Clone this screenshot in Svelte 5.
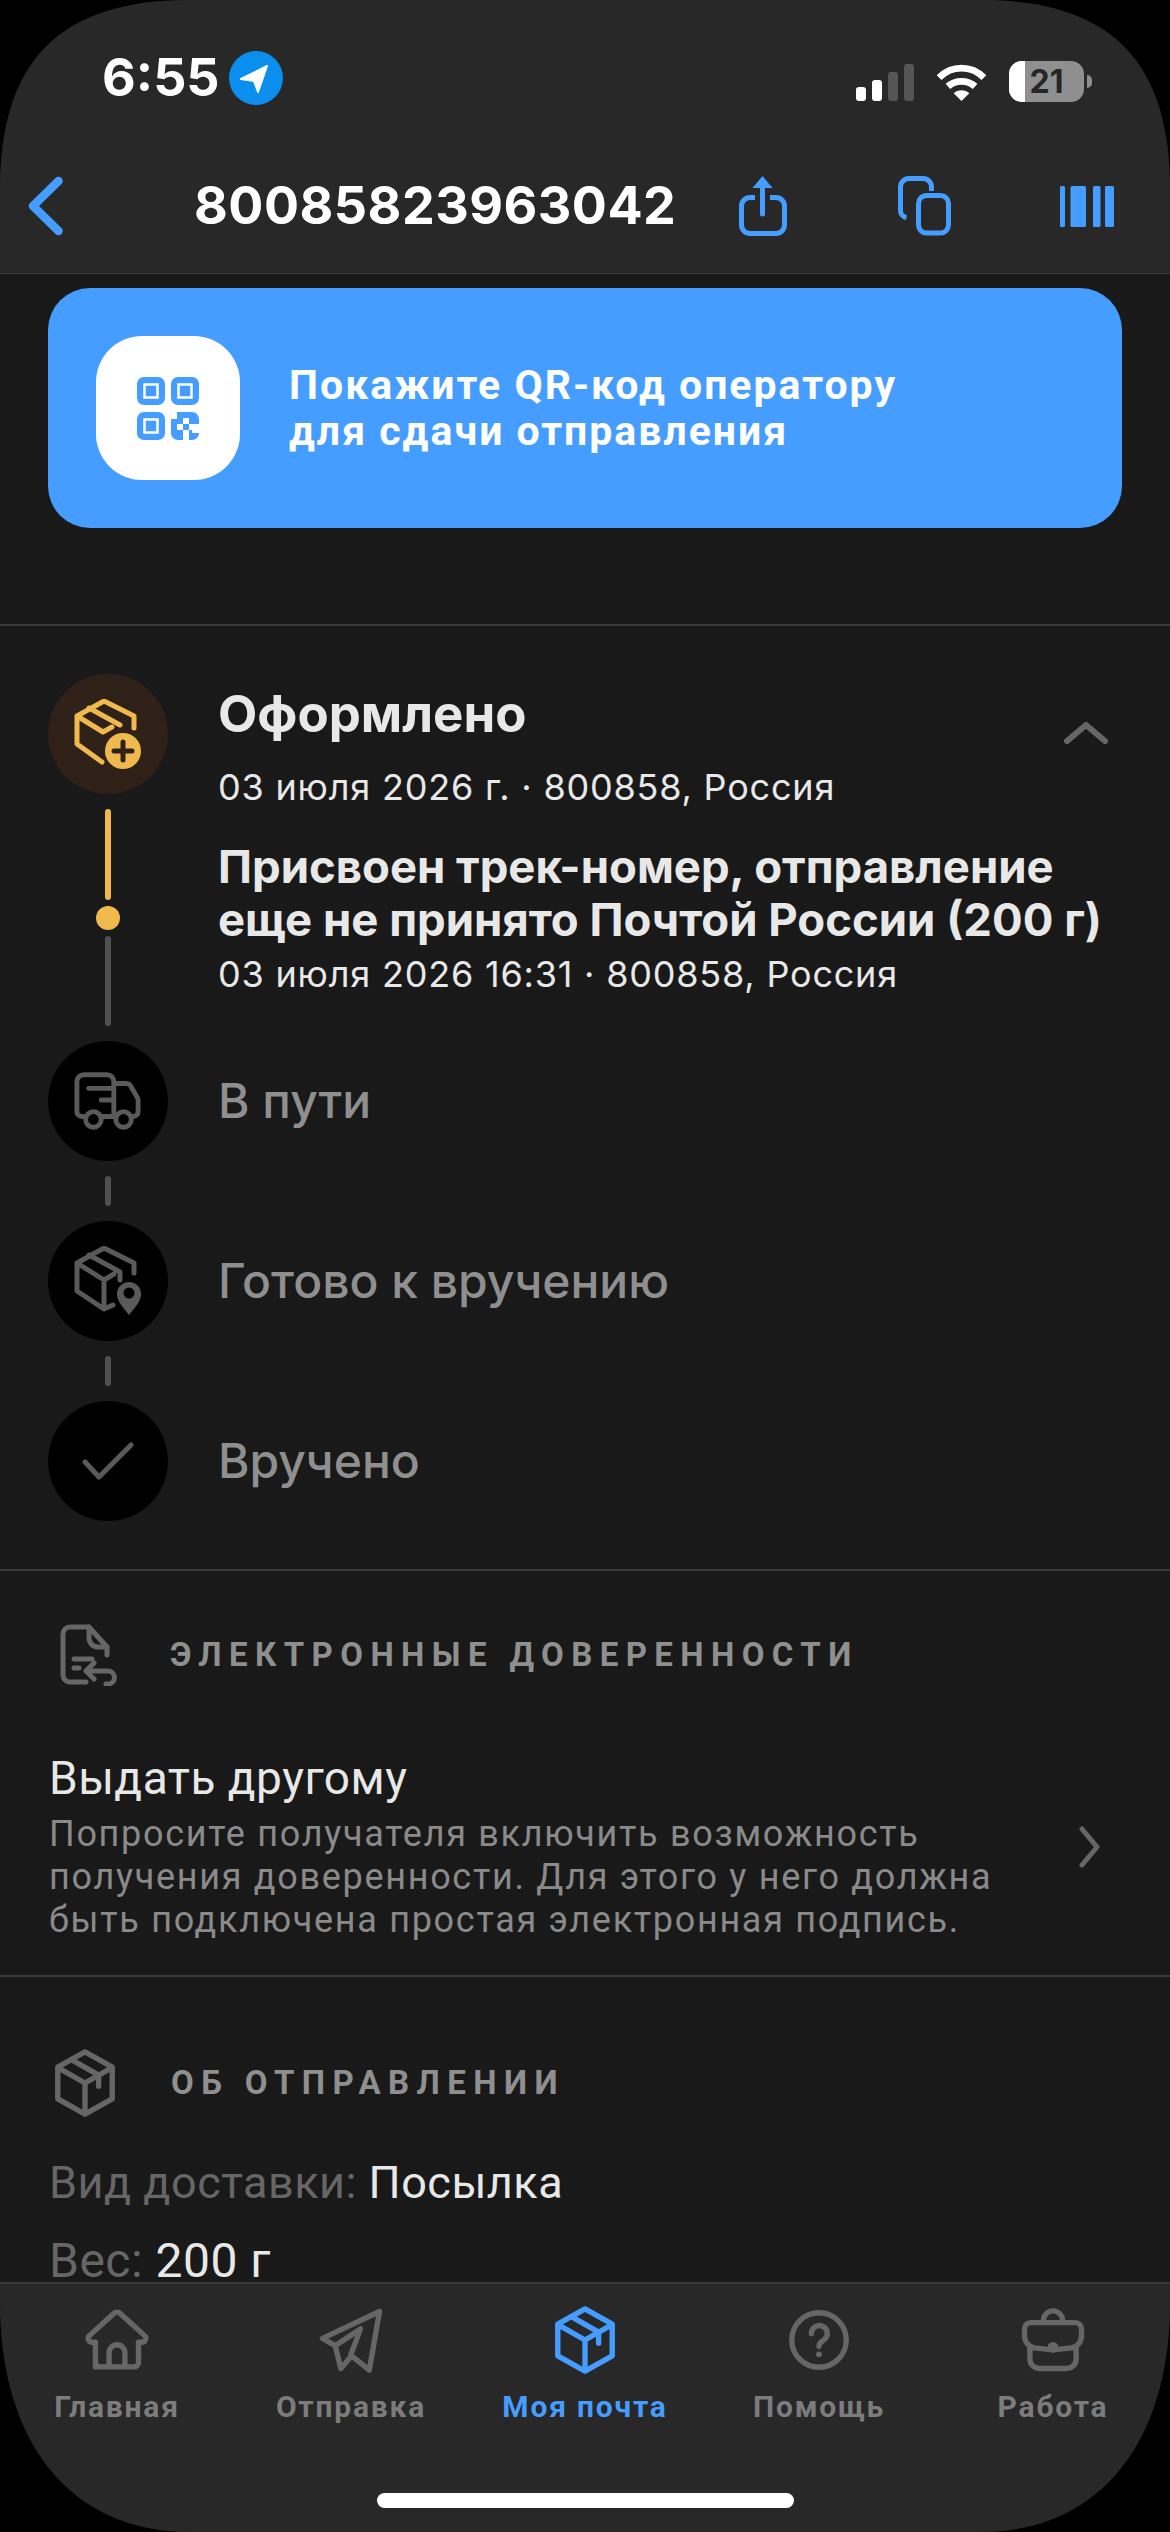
<script>
  const tabs = [
    { label: 'Главная', icon: 'home' },
    { label: 'Отправка', icon: 'send' },
    { label: 'Моя почта', icon: 'box', active: true },
    { label: 'Помощь', icon: 'help' },
    { label: 'Работа', icon: 'work' }
  ];
</script>

{#snippet box()}
  <path d="M12 2.200 20.600 7v10L12 21.800 3.400 17V7Z" />
  <path d="M3.600 7.200 12 12l8.400-4.800M12 12v9.600M7.700 4.600l8.600 4.900V13" />
{/snippet}

<div class="screen">
  <header class="top">
    <div class="status">
      <span class="time">6:55</span>
      <svg class="loc" viewBox="0 0 54 54"><circle cx="27" cy="27" r="27" fill="#0a8fee"/><path d="M38 15 12 28l13 2 4 11Z" fill="#fff" stroke="#fff" stroke-width="2" stroke-linejoin="round"/></svg>
      <span class="spacer"></span>
      <svg class="signal" viewBox="0 0 58 37"><rect x="0" y="23" width="10" height="14" rx="3" fill="#fff"/><rect x="16" y="16" width="10" height="21" rx="3" fill="#fff"/><rect x="32" y="8" width="10" height="29" rx="3" fill="#555"/><rect x="48" y="0" width="10" height="37" rx="3" fill="#555"/></svg>
      <svg class="wifi" viewBox="0 0 52 38" fill="none" stroke="#fff" stroke-width="7"><path d="M3 14C16 1 36 1 49 14"/><path d="M12 23c8-7 20-7 28 0"/><path d="M26 38 18 30c4-4 12-4 16 0Z" fill="#fff" stroke="none"/></svg>
      <span class="battery"><i class="fill"></i><b>21</b></span>
      <i class="nub"></i>
    </div>
    <nav class="nav">
      <svg class="back" viewBox="0 0 36 60" fill="none" stroke="#459eff" stroke-width="8.500" stroke-linecap="round" stroke-linejoin="round"><path d="M30.500 5 5 30l25.500 25"/></svg>
      <h1>80085823963042</h1>
      <svg class="share" viewBox="0 0 48 60" fill="none" stroke="#459eff" stroke-width="5"><path d="M23.500 38V8" stroke-linecap="round"/><path d="M23.500 0l10 12h-20Z" fill="#459eff" stroke="none"/><path d="M16 21.500H11a8.500 8.500 0 0 0-8.500 8.500V49a8.500 8.500 0 0 0 8.500 8.500h26a8.500 8.500 0 0 0 8.500-8.500V30a8.500 8.500 0 0 0-8.500-8.500H31"/></svg>
      <svg class="copy" viewBox="0 0 54 60" fill="none" stroke="#459eff" stroke-width="5"><rect x="20.500" y="19.500" width="30" height="37.500" rx="8"/><path d="M33.500 15v-4A8.500 8.500 0 0 0 25 2.500H11A8.500 8.500 0 0 0 2.500 11v24a7 7 0 0 0 6 6.500"/></svg>
      <svg class="barcode" viewBox="0 0 54 41" fill="#459eff"><rect width="5" height="41" rx="1.500"/><rect x="10.500" width="15.500" height="41" rx="1.500"/><rect x="33" width="7.500" height="41" rx="1.500"/><rect x="45" width="9" height="41" rx="1.500"/></svg>
    </nav>
  </header>

  <main class="content">
    <section class="card">
      <div class="qr-tile">
        <svg viewBox="0 0 62 63">
          <g fill="#459eff"><rect width="28" height="28" rx="7"/><rect x="34" width="28" height="28" rx="7"/><rect y="35" width="28" height="28" rx="7"/><rect x="34" y="35" width="28" height="28" rx="7"/></g>
          <g fill="none" stroke="#fff" stroke-width="2.500"><rect x="7.500" y="7.500" width="13" height="13"/><rect x="41.500" y="7.500" width="13" height="13"/><rect x="7.500" y="42.500" width="13" height="13"/></g>
          <g fill="#fff"><rect x="34" y="35" width="6" height="7"/><rect x="46" y="41" width="6" height="6"/><rect x="40" y="47" width="6" height="6"/><rect x="52" y="47" width="10" height="6"/><rect x="46" y="53" width="6" height="10"/><rect x="55" y="53" width="7" height="3"/></g>
        </svg>
      </div>
      <p>Покажите QR-код оператору<br />для сдачи отправления</p>
    </section>

    <div class="rule first"></div>

    <section class="timeline">
      <div class="stage current">
        <div class="rail">
          <span class="disc amber">
            <svg viewBox="0 0 68 70" fill="none" stroke="#f0b94d" stroke-width="5" stroke-linejoin="round" stroke-linecap="round">
              <path d="M30 2 60 17v12M30 2 3 17v28l25 18M3 17l26 16 9-5M15 9l31 17"/>
              <circle cx="49" cy="52" r="18" fill="#f0b94d" stroke="none"/>
              <path d="M49 43v18M40 52h18" stroke="#2f2118"/>
            </svg>
          </span>
          <i class="bar amber-bar long"></i>
          <i class="dot"></i>
          <i class="bar grey-bar long2"></i>
        </div>
        <div class="body">
          <div class="head">
            <h2>Оформлено</h2>
            <svg class="up" viewBox="0 0 44 22" fill="none" stroke="#666" stroke-width="6" stroke-linecap="round" stroke-linejoin="round"><path d="M3 19 22 3l19 16"/></svg>
          </div>
          <p class="meta">03 июля 2026 г. · 800858, Россия</p>
          <p class="event">Присвоен трек-номер, отправление<br />еще не принято Почтой России (200 г)</p>
          <p class="meta tight">03 июля 2026 16:31 · 800858, Россия</p>
        </div>
      </div>

      <div class="stage step">
        <div class="rail">
          <span class="disc">
            <svg viewBox="0 0 70 60" fill="none" stroke="#5a5a5a" stroke-width="5" stroke-linecap="round" stroke-linejoin="round"><path d="M10 46H8a5 5 0 0 1-5-5V10a7 7 0 0 1 7-7h24a7 7 0 0 1 7 7v36M15 17h26M28 29h13M41 12h13a5 5 0 0 1 4 2l7 12a6 6 0 0 1 1 3v12a5 5 0 0 1-5 5h-2M28 46h14"/><circle cx="20" cy="49" r="8"/><circle cx="51" cy="49" r="8"/></svg>
          </span>
        </div>
        <p class="label">В пути</p>
      </div>
      <i class="bar grey-bar short"></i>
      <div class="stage step">
        <div class="rail">
          <span class="disc">
            <svg viewBox="0 0 68 70" fill="none" stroke="#5a5a5a" stroke-width="5" stroke-linejoin="round" stroke-linecap="round"><path d="M30 2 60 17v10M30 2 3 17v28l27 18 9-4M3 17l27 17 10-6M30 34v29M15 9l31 17v8"/><path d="M55 69C45 57 43 53 43 48a12 12 0 0 1 24 0c0 5-2 9-12 21Z" fill="#5a5a5a" stroke="none"/><circle cx="55" cy="47" r="5.500" fill="#000" stroke="none"/></svg>
          </span>
        </div>
        <p class="label">Готово к вручению</p>
      </div>
      <i class="bar grey-bar short"></i>
      <div class="stage step">
        <div class="rail">
          <span class="disc">
            <svg class="tick" viewBox="0 0 52 38" fill="none" stroke="#5a5a5a" stroke-width="5" stroke-linecap="round" stroke-linejoin="round"><path d="M3 20l14 15L49 3"/></svg>
          </span>
        </div>
        <p class="label">Вручено</p>
      </div>
    </section>

    <div class="rule second"></div>

    <section class="attorney">
      <div class="section-head doc-head">
        <svg class="doc" viewBox="0 0 58 62" fill="none" stroke="#666" stroke-width="5" stroke-linecap="round" stroke-linejoin="round"><path d="M26 58H10a7 7 0 0 1-7-7V10a7 7 0 0 1 7-7h19l18 20v8"/><path d="M29 3v11a9 9 0 0 0 9 9h9M14 35h18M14 44h5"/><path d="M34 39l-8 8 8 8M26 47h22a6.500 6.500 0 0 1 0 13h-2"/></svg>
        <h3>ЭЛЕКТРОННЫЕ ДОВЕРЕННОСТИ</h3>
      </div>
      <div class="give">
        <div>
          <h4>Выдать другому</h4>
          <p>Попросите получателя включить возможность<br />получения доверенности. Для этого у него должна<br />быть подключена простая электронная подпись.</p>
        </div>
        <svg class="right" viewBox="0 0 21 42" fill="none" stroke="#666" stroke-width="5" stroke-linecap="round" stroke-linejoin="round"><path d="M3 3l15 18L3 39"/></svg>
      </div>
    </section>

    <div class="rule"></div>

    <section class="about">
      <div class="section-head box-head">
        <svg class="boxicon" viewBox="0 0 24 24" fill="none" stroke="#666" stroke-width="1.700" stroke-linecap="round" stroke-linejoin="round">{@render box()}</svg>
        <h3>ОБ ОТПРАВЛЕНИИ</h3>
      </div>
      <p class="kv"><span>Вид доставки:</span> Посылка</p>
      <p class="kv last"><span>Вес:</span> 200 г</p>
    </section>
  </main>

  <footer class="tabbar">
    <div class="tabs">
      {#each tabs as t}
        <div class="tab" class:active={t.active}>
          <svg viewBox="0 0 24 24" fill="none" stroke="currentColor" stroke-width="1.700" stroke-linecap="round" stroke-linejoin="round">
            {#if t.icon === 'home'}
              <path d="M5.200 20.500V12.700H4a1.200 1.200 0 0 1-.8-2L11 3.600a1.500 1.500 0 0 1 2 0l7.800 7.100a1.200 1.200 0 0 1-.8 2h-1.200v6.300a1.500 1.500 0 0 1-1.500 1.500h-10.600a1.500 1.500 0 0 1-1.500-1.500Z"/>
              <path d="M9.500 20v-4a2.500 2.500 0 0 1 5 0v4"/>
            {:else if t.icon === 'send'}
              <path d="M21 3 3 11.500l4 2.300 1.800 7.200 3.400-4 5.600 4.500Z"/>
              <path d="M7 13.800 15 8.500l-3 8"/>
            {:else if t.icon === 'box'}
              {@render box()}
            {:else if t.icon === 'help'}
              <circle cx="12" cy="12" r="8.600"/>
              <path d="M9.600 10a2.500 2.500 0 1 1 3.900 2c-.9.600-1.500 1-1.500 2"/>
              <circle cx="12" cy="16.500" r=".9" fill="currentColor" stroke="none"/>
            {:else}
              <path d="M9 6.500V5.800a3 3 0 0 1 6 0v.7M5 6.500h14a2 2 0 0 1 2 2v2.500a4 4 0 0 1-3 3.500l-6 .6-6-.6a4 4 0 0 1-3-3.500V8.500a2 2 0 0 1 2-2Z"/>
              <path d="M4.700 14.500v3.500a3 3 0 0 0 3 3h8.600a3 3 0 0 0 3-3v-3.500"/>
              <circle cx="12" cy="14.300" r="1.700" fill="currentColor" stroke="none"/>
            {/if}
          </svg>
          <span>{t.label}</span>
        </div>
      {/each}
    </div>
    <i class="home"></i>
  </footer>
</div>

<style>
  :global(body) { margin: 0; background: #000; }
  * { box-sizing: border-box; }
  i { display: block; }
  h1, h2, h3, h4, p { margin: 0; font-weight: inherit; }
  .screen {
    width: 1170px; height: 2532px; background: #191919;
    clip-path: path("M0 190C0 60 60 0 190 0H980C1110 0 1170 60 1170 190V2302C1170 2442 1100 2532 980 2532H190C70 2532 0 2442 0 2302Z");
    overflow: hidden;
    display: flex; flex-direction: column;
    font-family: Inter, "Liberation Sans", sans-serif; color: #e8e8e8;
  }
  .top { height: 274px; flex: none; background: #282828; border-bottom: 1px solid #3c3c3c; padding: 51px 0 0 102px; }
  .status { display: flex; align-items: center; height: 54px; padding-right: 78px; }
  .time { font: 700 52px/54px Inter, sans-serif; color: #fff; width: 127px; white-space: nowrap; }
  .loc { width: 54px; height: 54px; }
  .spacer { flex: 1; }
  .signal { width: 58px; height: 37px; margin: 9px 22px 0 0; }
  .wifi { width: 51px; height: 37px; margin: 9px 22px 0 0; }
  .battery { position: relative; width: 75px; height: 41px; border-radius: 13px; background: #8f8f8f; overflow: hidden; text-align: center; margin-top: 6px; }
  .battery .fill { position: absolute; left: 0; top: 0; bottom: 0; width: 16px; background: #fff; }
  .battery b { position: relative; font: 700 32px/41px Inter, sans-serif; color: #262626; }
  .nub { width: 5px; height: 13px; margin: 6px 0 0 3px; background: #8f8f8f; border-radius: 0 6px 6px 0; }
  .nav { display: flex; align-items: center; margin: 71px 0 0 -74px; height: 60px; position: relative; }
  .nav svg { flex: none; }
  .back { width: 36px; height: 60px; }
  h1 { font: 700 52px/60px Inter, sans-serif; color: #fff; margin-left: 130px; width: 479px; white-space: nowrap; letter-spacing: .5px; }
  .share { width: 48px; height: 60px; margin-left: 66px; }
  .copy { width: 54px; height: 60px; margin-left: 111px; }
  .barcode { width: 54px; height: 41px; margin-left: 108px; }

  .content { flex: 1; min-height: 0; overflow: hidden; padding-top: 14px; }
  .card { margin: 0 48px; height: 240px; border-radius: 42px; background: #459eff; display: flex; align-items: center; padding-left: 48px; }
  .qr-tile { width: 144px; height: 144px; border-radius: 46px; background: #fff; display: flex; align-items: center; justify-content: center; }
  .qr-tile svg { width: 62px; height: 63px; }
  .card p { margin-left: 49px; font: 700 41px/46px Roboto, sans-serif; color: #fff; letter-spacing: 2px; white-space: nowrap; }

  .rule { height: 2px; background: #3a3a3a; }
  .rule.first { margin-top: 96px; }

  .timeline { padding: 48px 48px 0; }
  .stage { display: flex; }
  .rail { width: 120px; flex: none; display: flex; flex-direction: column; align-items: center; }
  .disc { width: 120px; height: 120px; border-radius: 50%; background: #000; display: flex; align-items: center; justify-content: center; }
  .disc svg { width: 68px; height: 70px; }
  .disc .tick { width: 52px; height: 38px; }
  .disc.amber { background: #2f2118; }
  .bar { width: 6px; border-radius: 3px; }
  .amber-bar { background: #f0b94d; }
  .grey-bar { background: #505050; }
  .long { height: 91px; margin-top: 15px; }
  .dot { width: 24px; height: 24px; border-radius: 50%; background: #f0b94d; margin: 6px 0; }
  .long2 { height: 90px; }
  .short { height: 30px; margin: 15px 0 15px 57px; }
  .body { margin-left: 50px; flex: 1; padding-top: 10px; }
  .head { display: flex; justify-content: space-between; align-items: center; height: 60px; }
  h2 { font: 700 51px/60px Inter, sans-serif; }
  .up { width: 44px; height: 22px; margin: 38px 14px 0 0; }
  .meta { font: 400 36px/44px Inter, sans-serif; letter-spacing: .8px; white-space: nowrap; }
  .head + .meta { margin-top: 21px; }
  .event { font: 700 45.500px/53px Inter, sans-serif; margin-top: 31px; white-space: nowrap; }
  .meta.tight { margin-top: 6px; }
  .stage.current { margin-bottom: 15px; }
  .step { align-items: center; }
  .label { margin-left: 50px; font: 500 48px/60px Inter, sans-serif; color: #8f8f8f; }

  .rule.second { margin-top: 48px; }
  .section-head { display: flex; align-items: center; }
  .section-head h3 { font: 700 33px/40px Roboto, sans-serif; color: #8f8f8f; letter-spacing: 7.400px; white-space: nowrap; }
  .attorney { padding: 53px 48px 0; }
  .doc { width: 58px; height: 62px; margin: 0 52px 0 12px; flex: none; }
  .give { display: flex; align-items: center; justify-content: space-between; margin-top: 65px; padding-bottom: 33px; padding-left: 1px; }
  h4 { font: 400 46px/54px Roboto, sans-serif; letter-spacing: .5px; }
  .give p { font: 400 36px/43px Roboto, sans-serif; color: #8a8a8a; letter-spacing: 1.700px; white-space: nowrap; margin-top: 8px; }
  .right { width: 21px; height: 42px; margin-right: 22px; flex: none; }
  .about { padding: 68px 49px 0; }
  .boxicon { width: 76px; height: 76px; margin: 0 48.500px 0 -2.500px; flex: none; }
  .kv { font: 400 45px/44px Roboto, sans-serif; letter-spacing: .5px; margin-top: 34px; white-space: nowrap; }
  .kv.last { font-size: 48px; }
  .kv span { color: #666; }
  .box-head + .kv { margin-top: 40px; }

  .tabbar { flex: none; height: 250px; background: #282828; border-top: 2px solid #3a3a3a; position: relative; }
  .tabs { display: flex; padding-top: 18px; }
  .tab { width: 234px; display: flex; flex-direction: column; align-items: center; color: #666; }
  .tab svg { width: 76px; height: 76px; }
  .tab span { font: 700 30px/36px Roboto, sans-serif; color: #7c7c7c; letter-spacing: 1.800px; margin-top: 11px; white-space: nowrap; }
  .tab.active, .tab.active span { color: #459eff; }
  .home { position: absolute; left: 377px; top: 209px; width: 417px; height: 15px; border-radius: 8px; background: #fff; }
</style>
